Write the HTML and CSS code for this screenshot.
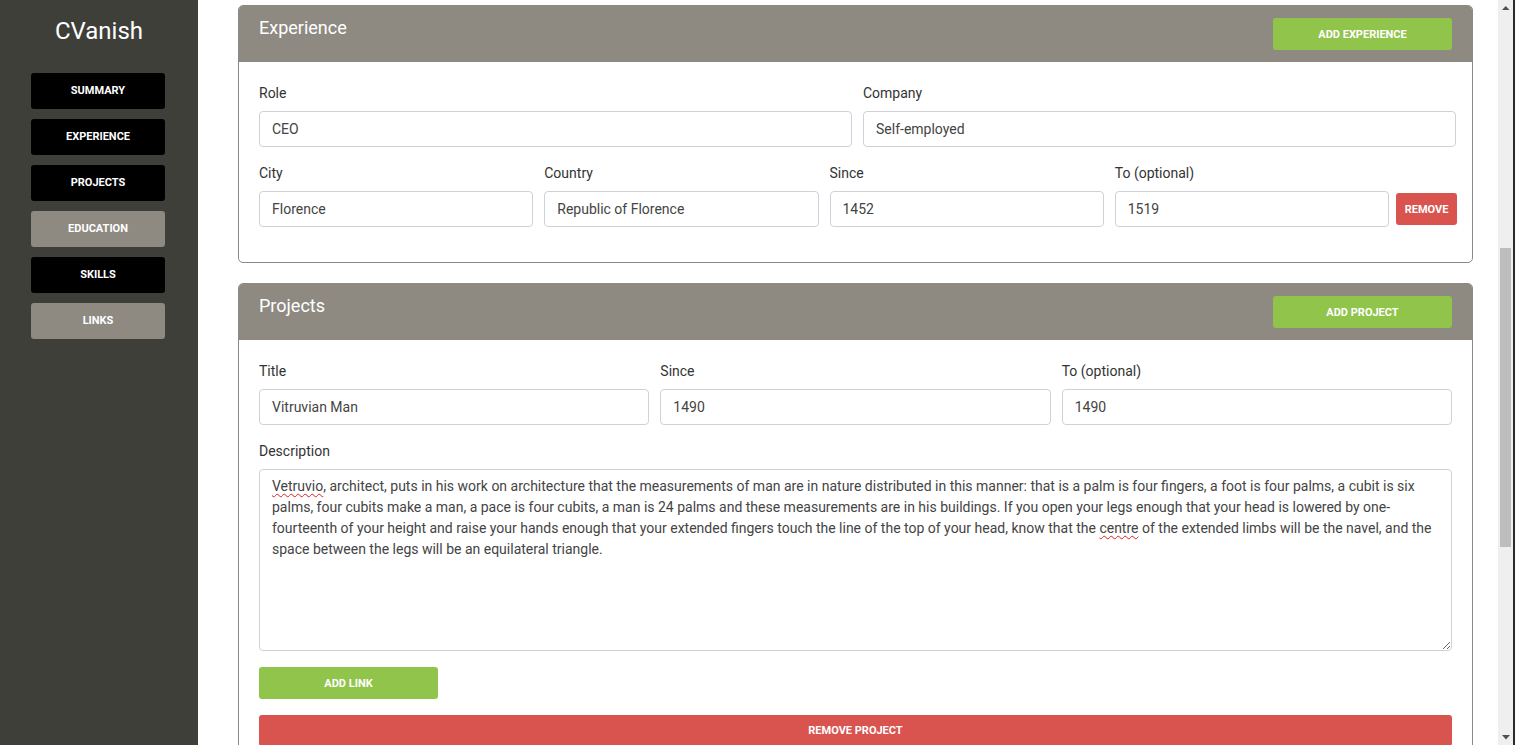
FILE: index.html
```html
<!DOCTYPE html>
<html lang="en">
<head>
<meta charset="utf-8">
<title>CVanish</title>
<link rel="stylesheet" href="styles.css">
</head>
<body>
<div class="app">
  <aside class="sidebar">
    <div class="brand">CVanish</div>
    <nav class="nav">
      <a class="nav-btn">Summary</a>
      <a class="nav-btn">Experience</a>
      <a class="nav-btn">Projects</a>
      <a class="nav-btn nav-btn-muted">Education</a>
      <a class="nav-btn">Skills</a>
      <a class="nav-btn nav-btn-muted">Links</a>
    </nav>
  </aside>
  <main class="main" id="main">
    <section class="card">
      <header class="card-head"><h2 class="card-title">Summary</h2></header>
      <div class="card-body">
        <div class="row row-2">
          <div class="field"><label class="label">Name</label><div class="input">Leonardo</div></div>
          <div class="field"><label class="label">Surname</label><div class="input">da Vinci</div></div>
        </div>
        <div class="row row-2">
          <div class="field"><label class="label">Email</label><div class="input">leonardo@vinci.it</div></div>
          <div class="field"><label class="label">Phone</label><div class="input">+39 055 1452</div></div>
        </div>
        <div class="row row-2">
          <div class="field"><label class="label">City</label><div class="input">Vinci</div></div>
          <div class="field"><label class="label">Country</label><div class="input">Republic of Florence</div></div>
        </div>
        <div class="field"><label class="label">Summary</label><div class="textbox textbox-short">Painter, engineer, architect and inventor.</div></div>
      </div>
    </section>

    <section class="card" id="experience">
      <header class="card-head">
        <h2 class="card-title">Experience</h2>
        <button class="btn btn-green btn-head">Add experience</button>
      </header>
      <div class="card-body card-body-exp">
        <div class="row row-2">
          <div class="field"><label class="label">Role</label><div class="input">CEO</div></div>
          <div class="field"><label class="label">Company</label><div class="input">Self-employed</div></div>
        </div>
        <div class="row row-4">
          <div class="field"><label class="label">City</label><div class="input">Florence</div></div>
          <div class="field"><label class="label">Country</label><div class="input">Republic of Florence</div></div>
          <div class="field"><label class="label">Since</label><div class="input">1452</div></div>
          <div class="field"><label class="label">To (optional)</label><div class="input">1519</div></div>
          <button class="btn btn-red btn-remove">Remove</button>
        </div>
      </div>
    </section>

    <section class="card">
      <header class="card-head">
        <h2 class="card-title">Projects</h2>
        <button class="btn btn-green btn-head">Add project</button>
      </header>
      <div class="card-body">
        <div class="row row-3">
          <div class="field"><label class="label">Title</label><div class="input">Vitruvian Man</div></div>
          <div class="field"><label class="label">Since</label><div class="input">1490</div></div>
          <div class="field"><label class="label">To (optional)</label><div class="input">1490</div></div>
        </div>
        <div class="field">
          <label class="label">Description</label>
          <div class="textbox"><span class="spell">Vetruvio</span>, architect, puts in his work on architecture that the measurements of man are in nature distributed in this manner: that is a palm is four fingers, a foot is four palms, a cubit is six palms, four cubits make a man, a pace is four cubits, a man is 24 palms and these measurements are in his buildings. If you open your legs enough that your head is lowered by one-fourteenth of your height and raise your hands enough that your extended fingers touch the line of the top of your head, know that the <span class="spell">centre</span> of the extended limbs will be the navel, and the space between the legs will be an equilateral triangle.</div>
        </div>
        <button class="btn btn-green btn-link">Add link</button>
        <button class="btn btn-red btn-wide">Remove project</button>
      </div>
    </section>

    <section class="card">
      <header class="card-head">
        <h2 class="card-title">Education</h2>
        <button class="btn btn-green btn-head">Add education</button>
      </header>
    </section>

    <section class="card">
      <header class="card-head">
        <h2 class="card-title">Skills</h2>
        <button class="btn btn-green btn-head">Add skill</button>
      </header>
    </section>

    <section class="card">
      <header class="card-head">
        <h2 class="card-title">Links</h2>
        <button class="btn btn-green btn-head">Add link</button>
      </header>
    </section>
  </main>
  <div class="scrollbar" aria-hidden="true">
    <div class="sb-arrow">
      <svg width="15" height="15" viewBox="0 0 15 15"><polygon points="4,10 11.5,10 7.75,6" fill="#505050"/></svg>
    </div>
    <div class="sb-track"><div class="sb-thumb"></div></div>
    <div class="sb-arrow">
      <svg width="15" height="15" viewBox="0 0 15 15"><polygon points="4,5 12,5 8,9.5" fill="#505050"/></svg>
    </div>
  </div>
  <div class="window-edge"></div>
</div>
<script src="main.js"></script>
</body>
</html>
```

FILE: styles.css
```css
* { box-sizing: border-box; }
html, body { margin: 0; height: 100%; overflow: hidden; }
body { font-family: Roboto, "Liberation Sans", Arial, sans-serif; color: #333; background: #fff; }

.app { display: flex; height: 100vh; }

.sidebar {
  width: 198px;
  flex: 0 0 198px;
  background: #3f3f3a;
  display: flex;
  flex-direction: column;
  align-items: center;
  padding-top: 17px;
}
.brand { color: #fff; font-size: 24px; line-height: 28px; margin-bottom: 28px; }
.nav { display: flex; flex-direction: column; gap: 10px; }
.nav-btn {
  width: 134px; height: 36px; border-radius: 3px;
  background: #000; color: #fff;
  display: flex; align-items: center; justify-content: center;
  padding-bottom: 1px;
  font-size: 11px; font-weight: 700; text-transform: uppercase;
  margin-left: -2px;
}
.nav-btn-muted { background: #8e8a82; }

.main {
  flex: 1;
  height: 100vh;
  overflow-y: scroll;
  scrollbar-width: none;
  padding: 20px 25px 330px 40px;
}
.main::-webkit-scrollbar { display: none; }

.scrollbar {
  flex: 0 0 15px;
  width: 15px;
  background: #efefef;
  display: flex;
  flex-direction: column;
}
.sb-arrow { height: 15px; flex: 0 0 15px; }
.sb-arrow svg { display: block; }
.sb-track { flex: 1; padding-top: 233px; }
.sb-thumb { width: 11px; height: 299px; margin-left: 2px; background: #bdbdbd; }
.window-edge { flex: 0 0 2px; background: #2b2b2b; }

.card {
  border: 1px solid #8a8a86;
  border-radius: 5px;
  margin-bottom: 20px;
  background: #fff;
  overflow: hidden;
}
.card-head {
  background: #8e8a82;
  height: 56px;
  padding: 12px 20px 0 20px;
  display: flex;
  justify-content: space-between;
  align-items: flex-start;
}
.card-title { margin: 0; font-size: 18px; line-height: 20px; font-weight: 400; color: #fff; }

.card-body { padding: 21px 20px 20px 20px; }
.card-body-exp { padding: 21px 16px 19px 20px; }

.row { display: grid; gap: 11px; margin-bottom: 16px; }
.row-2 { grid-template-columns: 1fr 1fr; }
.row-3 { grid-template-columns: 1fr 1fr 1fr; }
.row-4 { grid-template-columns: 1fr 1fr 1fr 1fr 56px; }
.row-4 .btn-remove { margin-left: -4px; align-self: end; margin-bottom: 2px; }

.field { display: flex; flex-direction: column; min-width: 0; }
.label { display: block; font-size: 14px; line-height: 20px; margin-bottom: 8px; color: #333; }
.input {
  height: 36px;
  border: 1px solid #ced2d8;
  border-radius: 4px;
  padding: 1px 12px 0 12px;
  font-size: 14px;
  line-height: 33px;
  color: #444;
  white-space: nowrap;
  overflow: hidden;
}

.textbox {
  height: 182px;
  border: 1px solid #ced2d8;
  border-radius: 4px;
  padding: 6px 12px;
  font-size: 14px;
  line-height: 21px;
  color: #444;
  overflow: auto;
  resize: vertical;
}
.textbox-short { height: 166px; }
.spell { text-decoration: underline wavy #e02020; text-decoration-thickness: 1px; text-decoration-skip-ink: none; text-underline-offset: 2px; }

.btn {
  border: 0;
  border-radius: 3px;
  color: #fff;
  font-family: Roboto, "Liberation Sans", Arial, sans-serif;
  font-size: 11px;
  font-weight: 700;
  text-transform: uppercase;
  cursor: pointer;
  display: flex; align-items: center; justify-content: center;
  padding: 0;
}
.btn-green { background: #91c44b; }
.btn-red { background: #d9534f; }
.btn-head { width: 179px; height: 32px; margin-top: 0; }
.btn-remove { width: 61px; height: 32px; }
.btn-link { width: 179px; height: 32px; margin-top: 16px; }
.btn-wide { width: 100%; height: 31px; margin-top: 16px; }
```

FILE: main.js
```js
(function () {
  var m = document.getElementById('main');
  var e = document.getElementById('experience');
  m.scrollTop = e.getBoundingClientRect().top - m.getBoundingClientRect().top - 5;
})();
```
